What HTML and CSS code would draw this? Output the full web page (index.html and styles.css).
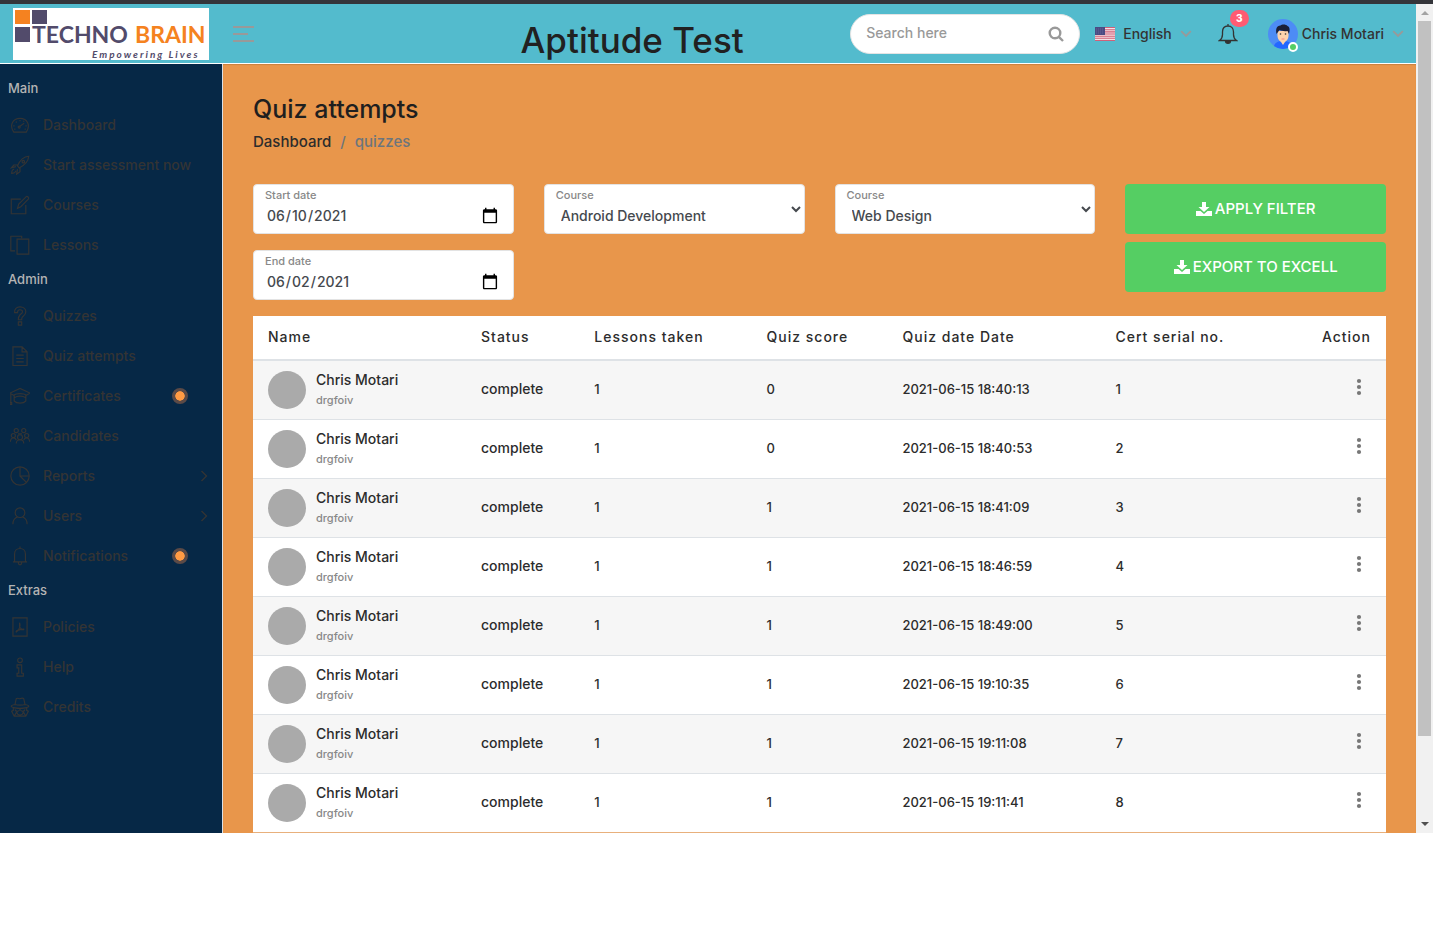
FILE: index.html
```html
<!DOCTYPE html>
<html lang="en">
<head>
<meta charset="utf-8">
<title>Aptitude Test</title>
<link rel="stylesheet" href="styles.css">
</head>
<body>
<svg class="sprite" aria-hidden="true">
  <symbol id="dots" viewBox="0 0 6 18"><circle cx="3" cy="3" r="2.1"/><circle cx="3" cy="9" r="2.1"/><circle cx="3" cy="15" r="2.1"/></symbol>
  <symbol id="down" viewBox="0 0 12 8"><path d="M1.2 1.2L6 6l4.800-4.800" fill="none" stroke="currentColor" stroke-width="1.800"/></symbol>
  <symbol id="right" viewBox="0 0 8 12"><path d="M1.500 1L6.500 6l-5 5" fill="none" stroke="currentColor"/></symbol>
  <symbol id="download" viewBox="0 0 16 16"><path d="M6 1h4v5h3.500L8 11 2.500 6H6z"/><path d="M0 10h4.500L8 13l3.500-3H16v5H0z"/></symbol>
</svg>
<div class="window">
  <div class="app">
    <header class="topbar">
      <a class="brand" href="#" aria-label="Techno Brain">
        <svg width="196" height="52" viewBox="0 0 196 52">
          <rect width="196" height="52" fill="#fff"/>
          <rect x="2" y="2" width="15" height="14" fill="#f58220"/>
          <rect x="19" y="2" width="15" height="14" fill="#524b6b"/>
          <rect x="2" y="19" width="15" height="15" fill="#524b6b"/>
          <text class="logo-name" x="19" y="35"><tspan fill="#524b6b">TECHNO</tspan><tspan fill="#f58220" x="122">BRAIN</tspan></text>
          <text class="logo-tag" x="79" y="50" fill="#524b6b">Empowering Lives</text>
        </svg>
      </a>
      <button class="toggle" aria-label="Toggle menu"><span></span><span class="short"></span><span></span></button>
      <h1>Aptitude Test</h1>
      <form class="search">
        <input type="text" placeholder="Search here" aria-label="Search">
        <button type="button" aria-label="Search"><svg width="16" height="16" viewBox="0 0 16 16" fill="none" stroke="#999" stroke-width="2.400"><circle cx="7" cy="7" r="5.300"/><path d="M10.800 10.800L15 15"/></svg></button>
      </form>
      <a class="language" href="#">
        <svg width="20" height="14" viewBox="0 0 20 14"><rect width="20" height="14" fill="#f5dfe3"/><path d="M0 .5h20M0 2.700h20M0 4.900h20M0 7h20M0 9.200h20M0 11.300h20M0 13.500h20" stroke="#d0617a" stroke-width="1.100"/><rect width="10" height="8" fill="#4b4b83"/><path d="M1 2h8M1 4h8M1 6h8" stroke="#7777a5" stroke-width=".6" stroke-dasharray="1 1"/></svg>
        <span>English</span><svg class="caret" width="12" height="8"><use href="#down"/></svg>
      </a>
      <button class="bell" aria-label="Notifications">
        <svg width="20" height="20" viewBox="0 0 20 20" fill="none" stroke="#333" stroke-width="1.300"><path d="M10 0v2M1.500 16.500h17c-2-1.500-3-3-3-6V8c0-3.500-2-6-5.500-6S4.500 4.500 4.500 8v2.500c0 3-1 4.500-3 6z"/><path d="M7.500 17c0 3 5 3 5 0z" fill="#333"/></svg>
        <span class="badge">3</span>
      </button>
      <a class="user" href="#">
        <span class="avatar">
          <svg width="30" height="30" viewBox="0 0 30 30"><circle cx="15" cy="15" r="15" fill="#4d8cf5"/><path d="M6 27c1-4 5-5 9-5s8 1 9 5a15 15 0 0 1-18 0z" fill="#2467ff"/><path d="M9.500 12h11v5c0 3-2 5-3.500 6l-2 3-2-3c-1.500-1-3.500-3-3.500-6z" fill="#fdd3ac"/><path d="M8.500 15c-1-5 0-8 4-8.500C14 5 18 5 19.500 7c2.500 1 2.500 4 1.500 8l-1.500-3c-3 .5-6 0-8-1z" fill="#1b1f38"/><circle cx="12.500" cy="15" r=".8" fill="#333"/><circle cx="17.500" cy="15" r=".8" fill="#333"/><path d="M13.500 20h3" stroke="#e88"/></svg>
          <i class="online"></i>
        </span>
        <span>Chris Motari</span><svg class="caret" width="12" height="8"><use href="#down"/></svg>
      </a>
    </header>
    <div class="body">
      <nav class="sidebar">
        <h2>Main</h2>
        <a href="#"><svg viewBox="0 0 24 24"><path d="M4.500 20.500C-1 13 3 4 12 4s13 9 7.500 16.500zM11 14l6-4M12 6v1.500M7 8l1 1M17 7l-1 1M4 13h1.500M18.500 13H20M5 17h1.500M17.500 17H19"/><circle cx="11" cy="14.500" r="1.200"/></svg>Dashboard</a>
        <a href="#"><svg viewBox="0 0 24 24"><path d="M9 13C12 6 16 2 22.500 1.500 22 8 18 12 11 15.500zM9 12H4.500L1.500 15.500 7 14M12 15.500v4.500l-4 3 1-6M5 17c-2 0-3 3-3 5 2 0 5-1 5-3"/><circle cx="16" cy="8" r="1.500"/></svg>Start assessment now</a>
        <a href="#"><svg viewBox="0 0 24 24"><path d="M13 5H1.500v17.500H19V12M9 16l1.500-5L19.500 2c1-1 4 1 2.500 3l-9 9z"/></svg>Courses</a>
        <a href="#"><svg viewBox="0 0 24 24"><path d="M6 19H1V1.500h13V4M8.500 5H22.500v18H8.500z"/></svg>Lessons</a>
        <h2>Admin</h2>
        <a href="#"><svg viewBox="0 0 24 24"><path d="M5.500 8C5 3.500 8 1 12 1s7 2.500 7 6-2 4.500-4 6c-1 1-1 2-1 3.500h-4c0-3 .5-4.500 2-6 2-1.500 3-2 3-3.500S13.500 4.500 12 4.500 9 6 9 8zM10 19h4v4h-4z"/></svg>Quizzes</a>
        <a href="#"><svg viewBox="0 0 24 24"><path d="M3.500 1h11l6 6v16.500h-17zM14.500 1v6h6M7.500 11h9M7.500 15h9M7.500 19h9"/></svg>Quiz attempts</a>
        <a href="#"><svg viewBox="0 0 24 24"><path d="M0 8.500L12 3l12 5.500-4 2.500C16 8.500 8 8.500 4 11zM5 11v7c3 3.500 11 3.500 14 0v-7M5 14c4-2.500 10-2.500 14 0M1 9v11M0 20v2h2v-2z"/></svg>Certificates<i class="pulse"></i></a>
        <a href="#"><svg viewBox="0 0 24 24"><circle cx="7.500" cy="5.500" r="2.500"/><circle cx="16.500" cy="5.500" r="2.500"/><circle cx="4" cy="11.500" r="2.500"/><circle cx="20" cy="11.500" r="2.500"/><circle cx="12" cy="13.500" r="3"/><path d="M.5 19c0-6 6-6 7-2M23.500 19c0-6-6-6-7-2M7.500 21c0-6 9-6 9 0M9.500 9.500h5"/></svg>Candidates</a>
        <a href="#"><svg viewBox="0 0 24 24"><circle cx="12" cy="12" r="11"/><path d="M12 1v11h11M12 12l8 8"/></svg>Reports<svg class="next" viewBox="0 0 8 12"><use href="#right"/></svg></a>
        <a href="#"><svg viewBox="0 0 24 24"><circle cx="12" cy="8" r="5.800"/><path d="M3.500 22c0-6 3-8 5.500-8.800M20.500 22c0-6-3-8-5.500-8.800"/></svg>Users<svg class="next" viewBox="0 0 8 12"><use href="#right"/></svg></a>
        <a href="#"><svg viewBox="0 0 24 24"><path d="M3.500 19h17M5.500 19V9.500C5.500 5.500 8.500 3 12 3s6.500 2.500 6.500 6.500V19M12 .5V3M10 19.500c0 4 4 4 4 0"/></svg>Notifications<i class="pulse"></i></a>
        <h2>Extras</h2>
        <a href="#"><svg viewBox="0 0 24 24"><path d="M3.500 1h17v22h-17zM11.500 7c2 4-1 9-4 11-1-1 2-3 9-3.500 1 2-4 0-5-3z"/></svg>Policies</a>
        <a href="#"><svg viewBox="0 0 24 24"><circle cx="12" cy="4" r="2.800"/><path d="M8.500 9.500H14v10h2V23H8.500v-3.500h2v-6.500h-2z"/></svg>Help</a>
        <a href="#"><svg viewBox="0 0 24 24"><path d="M6 9l1.500-7c2-1.500 3 .5 4.500 0s3-1.500 4.500 0L18 9c6 1 6 3 0 4-4 .8-8 .8-12 0-6-1-6-3 0-4zM6 9c4 1 8 1 12 0M4 13v3l-2 1 3 6h14l3-6-2-1v-3M6 15c1 3 4 3 6 0 2 3 5 3 6 0M8 18c1 5 7 5 8 0M5 23l3-5M19 23l-3-5"/></svg>Credits</a>
      </nav>
      <main>
        <h2 class="title">Quiz attempts</h2>
        <div class="crumbs"><a href="#">Dashboard</a><span>/</span><span>quizzes</span></div>
        <div class="filters">
          <div class="stack">
            <div class="field"><label for="start">Start date</label><input id="start" type="date" value="2021-06-10"></div>
            <div class="field"><label for="end">End date</label><input id="end" type="date" value="2021-06-02"></div>
          </div>
          <div class="field"><label for="course-a">Course</label><select id="course-a"><option>Android Development</option></select></div>
          <div class="field"><label for="course-b">Course</label><select id="course-b"><option>Web Design</option></select></div>
          <div class="actions">
            <button><svg width="16" height="16"><use href="#download"/></svg>APPLY FILTER</button>
            <button><svg width="16" height="16"><use href="#download"/></svg>EXPORT TO EXCELL</button>
          </div>
        </div>
        <table>
          <colgroup><col class="c-name"><col class="c-status"><col class="c-lessons"><col class="c-score"><col class="c-date"><col class="c-cert"><col class="c-action"></colgroup>
          <thead><tr><th>Name</th><th>Status</th><th>Lessons taken</th><th>Quiz score</th><th>Quiz date Date</th><th>Cert serial no.</th><th class="action">Action</th></tr></thead>
          <tbody>
            <tr><td><div class="person"><i></i><div>Chris Motari<small>drgfoiv</small></div></div></td><td>complete</td><td>1</td><td>0</td><td>2021-06-15 18:40:13</td><td>1</td><td class="action"><button class="more" aria-label="Actions"><svg><use href="#dots"/></svg></button></td></tr>
            <tr><td><div class="person"><i></i><div>Chris Motari<small>drgfoiv</small></div></div></td><td>complete</td><td>1</td><td>0</td><td>2021-06-15 18:40:53</td><td>2</td><td class="action"><button class="more" aria-label="Actions"><svg><use href="#dots"/></svg></button></td></tr>
            <tr><td><div class="person"><i></i><div>Chris Motari<small>drgfoiv</small></div></div></td><td>complete</td><td>1</td><td>1</td><td>2021-06-15 18:41:09</td><td>3</td><td class="action"><button class="more" aria-label="Actions"><svg><use href="#dots"/></svg></button></td></tr>
            <tr><td><div class="person"><i></i><div>Chris Motari<small>drgfoiv</small></div></div></td><td>complete</td><td>1</td><td>1</td><td>2021-06-15 18:46:59</td><td>4</td><td class="action"><button class="more" aria-label="Actions"><svg><use href="#dots"/></svg></button></td></tr>
            <tr><td><div class="person"><i></i><div>Chris Motari<small>drgfoiv</small></div></div></td><td>complete</td><td>1</td><td>1</td><td>2021-06-15 18:49:00</td><td>5</td><td class="action"><button class="more" aria-label="Actions"><svg><use href="#dots"/></svg></button></td></tr>
            <tr><td><div class="person"><i></i><div>Chris Motari<small>drgfoiv</small></div></div></td><td>complete</td><td>1</td><td>1</td><td>2021-06-15 19:10:35</td><td>6</td><td class="action"><button class="more" aria-label="Actions"><svg><use href="#dots"/></svg></button></td></tr>
            <tr><td><div class="person"><i></i><div>Chris Motari<small>drgfoiv</small></div></div></td><td>complete</td><td>1</td><td>1</td><td>2021-06-15 19:11:08</td><td>7</td><td class="action"><button class="more" aria-label="Actions"><svg><use href="#dots"/></svg></button></td></tr>
            <tr><td><div class="person"><i></i><div>Chris Motari<small>drgfoiv</small></div></div></td><td>complete</td><td>1</td><td>1</td><td>2021-06-15 19:11:41</td><td>8</td><td class="action"><button class="more" aria-label="Actions"><svg><use href="#dots"/></svg></button></td></tr>
          </tbody>
        </table>
      </main>
    </div>
  </div>
  <div class="scrollbar" aria-hidden="true">
    <svg width="17" height="17" viewBox="0 0 17 17"><path d="M5 11h8L9 7z" fill="#a3a3a3"/></svg>
    <div class="track"><div class="thumb"></div></div>
    <svg width="17" height="17" viewBox="0 0 17 17"><path d="M5 6h8l-4 4z" fill="#505050"/></svg>
  </div>
</div>
</body>
</html>
```
FILE: styles.css
```css
* { box-sizing: border-box; }
body { margin: 0; background: #fff; color: #2c2c2c; font: 500 14px/20px Inter, "Liberation Sans", sans-serif; }
a { color: inherit; text-decoration: none; }
button, input, select { font: inherit; }
button { border: 0; background: none; padding: 0; }
h1, h2 { margin: 0; font-weight: 500; }
.sprite { position: absolute; width: 0; height: 0; }

.window { display: flex; margin-right: 7px; border-top: 4px solid #34353a; }
.app { flex: 1; min-width: 0; }

.topbar { display: flex; align-items: center; height: 60px; background: #53bbcd; border-bottom: 1px solid #fff; color: #333; }
.brand { width: 233px; height: 52px; padding-left: 13px; }
.brand svg { display: block; }
.logo-name { font: 700 23px Lato, sans-serif; }
.logo-tag { font: italic 700 10px Lato, sans-serif; letter-spacing: 2px; }
.toggle { display: grid; gap: 5px; width: 21px; }
.toggle span { height: 2px; background: #999; }
.toggle .short { width: 15px; }
.topbar h1 { flex: 1; padding: 12px 0 0 160px; text-align: center; font-size: 35px; line-height: 40px; color: #212121; white-space: nowrap; }
.search { display: flex; align-items: center; width: 230px; height: 40px; padding: 0 15px; border: 1px solid #e4e4e4; border-radius: 20px; background: #fff; }
.search input { flex: 1; min-width: 0; padding: 0 0 2px; border: 0; outline: 0; background: none; color: #333; }
.search input::placeholder { color: #999; }
.search button, .search svg { display: block; }
.language { display: flex; align-items: center; gap: 8px; margin-left: 15px; }
.caret { color: #999; }
.bell { position: relative; height: 20px; margin-left: 26px; color: #fff; }
.bell svg { display: block; }
.badge { position: absolute; left: 12px; top: -14px; width: 19px; height: 17px; border-radius: 9px; background: #ff5b72; font-size: 10px; font-weight: 800; line-height: 17px; text-align: center; }
.user { display: flex; align-items: center; gap: 4px; margin: 0 12px 0 30px; }
.user .caret { margin-left: 4px; }
.avatar { position: relative; height: 30px; }
.avatar svg { display: block; }
.online { position: absolute; right: 0; bottom: -3px; width: 10px; height: 10px; border: 2px solid #fff; border-radius: 50%; background: #55ce63; }

.body { display: flex; }
.sidebar { width: 223px; flex: none; padding-top: 10px; background: #062846; border-right: 1px solid #d8e0e6; color: #343434; }
.sidebar h2 { padding: 4px 8px 7px; font-size: 13px; line-height: 20px; color: #b4b4b4; }
.sidebar a { display: flex; align-items: center; height: 40px; padding-left: 10px; }
.sidebar svg { width: 20px; height: 20px; margin-right: 13px; fill: none; stroke: currentColor; stroke-width: 1.4; }
.sidebar .next { width: 8px; height: 12px; margin: 0 14px 0 auto; }
.pulse { width: 16px; height: 16px; margin: 0 34px 0 auto; border: 3px solid #5b4a47; border-radius: 50%; background: #ff9b44; background-clip: padding-box; }

main { flex: 1; min-width: 0; padding: 30px 30px 0; background: #e8964b; box-shadow: inset 0 1px 1px #c9813f; }
.title { font-size: 25px; line-height: 30px; color: #1f1f1f; }
.crumbs { display: flex; gap: 9px; margin-top: 8px; font-size: 15px; line-height: 20px; }
.crumbs span { color: #6c757d; }
.filters { display: grid; grid-template-columns: repeat(4, 1fr); align-items: start; gap: 30px; margin-top: 32px; }
.stack { display: grid; gap: 16px; }
.field { position: relative; }
.field label { position: absolute; left: 12px; top: 3px; font-size: 11px; line-height: 16px; color: #888; }
.field input, .field select { display: block; width: 100%; height: 50px; padding: 20px 12px 6px; border: 1px solid #e3e3e3; border-radius: 4px; background-color: #fff; color: #45494e; }
.field select { padding: 19px 12px 7px; }
.field input::-webkit-calendar-picker-indicator { width: 18px; height: 18px; }
.actions { display: grid; gap: 8px; }
.actions button { display: flex; align-items: center; justify-content: center; gap: 3px; height: 50px; border-radius: 4px; background: #55ce63; color: #fff; fill: #fff; font-size: 15px; }

table { width: 100%; margin-top: 16px; table-layout: fixed; border-collapse: collapse; background: #fff; }
.c-name { width: 18.8%; }
.c-status { width: 10%; }
.c-lessons { width: 15.2%; }
.c-score { width: 12%; }
.c-date { width: 18.8%; }
.c-cert { width: 15%; }
th, td { padding: 0 15px 2px; text-align: left; white-space: nowrap; }
th { height: 44px; border-bottom: 2px solid #dee2e6; font-weight: 500; letter-spacing: 1px; }
td { height: 59px; border-bottom: 1px solid #dee2e6; }
td:nth-child(n+3) { font-size: 13px; }
td:first-child { padding-bottom: 0; }
tbody tr:nth-child(odd) { background: #f6f6f6; }
tbody tr:last-child td { border-bottom-color: #e8b07c; }
.person { display: flex; align-items: center; gap: 10px; }
.person i { width: 38px; height: 38px; border-radius: 50%; background: #aaa; }
.person small { display: block; font-size: 11px; color: #888; }
.action { text-align: right; }
td.action { padding: 0 24px 8px 0; }
.more { height: 18px; fill: #777; vertical-align: middle; }
.more svg { display: block; width: 6px; height: 18px; }

.scrollbar { display: flex; flex-direction: column; width: 17px; background: #f1f1f1; }
.scrollbar svg { display: block; }
.track { flex: 1; padding: 0 2px; }
.thumb { height: 90%; background: #c1c1c1; }
```
